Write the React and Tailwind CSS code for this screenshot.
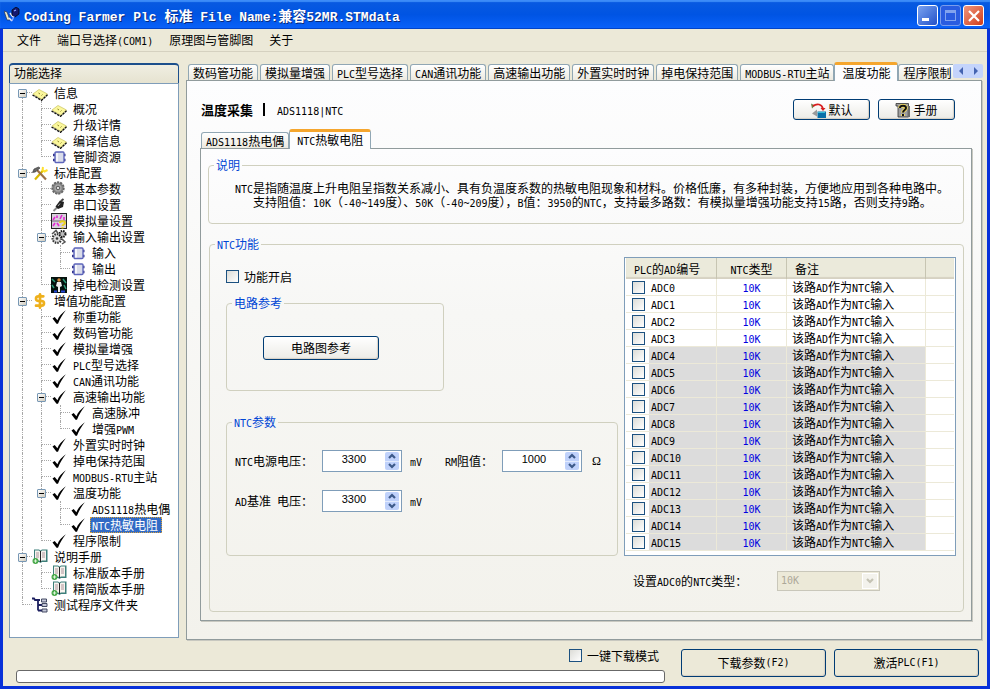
import React, { useState } from "react";
import clsx from "clsx";
import { DollarSign } from "lucide-react";

// Latin runs are set half as wide as a Chinese character
const Mixed = ({ children, latin = "font-['DejaVu_Sans_Mono',monospace] text-[10px]" }) =>
  children.split(/([\x20-\x7e]+)/).map((part, i) =>
    i % 2 ? (
      <span key={i} className={clsx("whitespace-pre leading-none", latin)}>
        {part}
      </span>
    ) : (
      part
    )
  );

/* ---------- icons ---------- */

const Svg = ({ children, className = "h-4 w-4" }) => (
  <svg viewBox="0 0 16 16" className={clsx("shrink-0", className)} aria-hidden="true">
    {children}
  </svg>
);

const NoteIcon = () => (
  <Svg>
    <path d="M1 9L7 4.500l8.500 4.500L10 14.500z" fill="#fbf79c" stroke="#cfc96a" strokeWidth=".8" />
    <path d="M.5 10L9.500 15.300l6-5.500" fill="none" stroke="#111" strokeWidth="1.400" strokeDasharray="2.500 .8" />
    <path d="M6.500 8l1.500 1M10.500 9.500l-1 1" stroke="#8a8426" strokeWidth="1" />
  </Svg>
);

const ChipIcon = () => (
  <Svg>
    <path d="M2 6h12.500M2 11h12.500" stroke="#34348c" strokeWidth="2.400" />
    <rect x="4" y="3" width="9" height="10.500" rx="1" fill="#d9dcea" stroke="#5d65bb" strokeWidth="1.400" />
    <path d="M6 4v8.500" stroke="#fff" strokeWidth="1.500" />
  </Svg>
);

const ToolsIcon = () => (
  <Svg>
    <path d="M3 14.500L11.500 5" stroke="#d8b800" strokeWidth="2.200" />
    <path d="M11 2l-.5 3 2 1.500 3-1.500" fill="none" stroke="#ffe02e" strokeWidth="2" />
    <path d="M5 5l9 9.500" stroke="#9a7048" strokeWidth="2.200" />
    <path d="M.5 7.500L2 4l4.500-2L8 3 5 5.500 3.500 7z" fill="#666" stroke="#333" strokeWidth=".6" />
  </Svg>
);

const GearIcon = () => (
  <Svg>
    <circle cx="7" cy="7" r="5.800" fill="#8c8c8c" stroke="#666" strokeWidth="1.800" strokeDasharray="2.200 1" />
    <circle cx="7" cy="7" r="4.200" fill="#a9a9a9" stroke="#7a7a7a" />
    <circle cx="7" cy="7" r="1.800" fill="#ddd" stroke="#555" />
  </Svg>
);

const PlugIcon = () => (
  <Svg>
    <path d="M2.500 14l4-4" stroke="#888" strokeWidth="1.800" />
    <path d="M4.500 9.500L9 3.500l4 1.500-1 5-5 2z" fill="#222" />
    <path d="M10 4l2.500-2" stroke="#444" strokeWidth="2" />
    <path d="M7 9l2-2.500" stroke="#aaa" />
  </Svg>
);

const WaveIcon = () => (
  <Svg>
    <rect x=".5" y=".5" width="15" height="15" fill="#d8cfdc" stroke="#222" />
    <path d="M1 8h14" stroke="#6b6773" />
    <path d="M2 7l2-3M6 5V2.500M9 6l2-4M13 4v3M2 13l2-3M6 10l2 3" fill="none" stroke="#e22bd2" strokeWidth="1.600" />
    <path d="M9 10c0-2.500 5-2.500 5 0 0 1.500-2.500 1.500-2.500 3M11.500 14v1.500" fill="none" stroke="#e8d020" strokeWidth="2" />
  </Svg>
);

const GearsIcon = () => (
  <Svg>
    <circle cx="6" cy="9.500" r="4.400" fill="#ddd" stroke="#333" strokeWidth="2.200" strokeDasharray="1.500 1" />
    <circle cx="11.500" cy="5" r="3" fill="#bbb" stroke="#111" strokeWidth="2" strokeDasharray="1.400 1" />
    <circle cx="6" cy="9.500" r="1.300" fill="#333" />
    <path d="M1 5l4-3.500 2 3M11 10l3 3-3 2" fill="none" stroke="#555" strokeWidth="1.500" />
  </Svg>
);

const PowerIcon = () => (
  <Svg>
    <rect width="16" height="16" fill="#06110d" />
    <path d="M1 2l3 3M12 2l3 4M13 8l2 4M1 8l2 3" stroke="#2d9a77" strokeWidth="1.500" />
    <path d="M6 5h4l1 4-2 1v5H7v-5L5 9z" fill="#eee" />
    <circle cx="8" cy="3" r="1.700" fill="#d48a3a" />
    <path d="M3 14.500h3M10 14.500h4" stroke="#2547d8" strokeWidth="2" />
  </Svg>
);

const CoinIcon = () => <DollarSign className="h-4 w-4 shrink-0 text-[#eeb01c]" strokeWidth={4} aria-hidden="true" />;

const CheckIcon = () => (
  <Svg>
    <path d="M1.500 9.500l2.200-1.500 2.700 3.300C8 7 11 4 14.800 1.200 11.500 5.500 9 9.500 7 14.800H5.500z" fill="#000" />
  </Svg>
);

const BookIcon = () => (
  <Svg>
    <path d="M2 .5h5l1.500 1 1.500-1h5.500v12.500H10l-1.500 1-1.500-1H2z" fill="#3d7f7a" />
    <path d="M3 1.500h4l1 1v9.500L7 11.500H3zM9 2.500l1-1h4v10h-4l-1 .5z" fill="#f8f4ef" />
    <path d="M4 4h3M4 6h3M4 8h3M10 4h3M10 6h3M10 8h3" stroke="#9a7f88" strokeWidth=".8" />
    <path d="M8.500 2v11" stroke="#222" />
    <circle cx="3.500" cy="12" r="3" fill="#46a848" />
    <path d="M3.500 10.300v3.400M1.800 12h3.400" stroke="#dff5dc" />
  </Svg>
);

const NodesIcon = () => (
  <Svg>
    <path d="M0 1.500h2l1 1.500h5M6 3v10.500M6 8h4M6 13.500h4" fill="none" stroke="#1d2060" strokeWidth="1.800" />
    <path d="M9.500 2h5v3h-5zM10 6.500h5v3h-5zM10 12h5v3h-5z" fill="#c5c8d8" stroke="#333a55" strokeWidth=".9" />
  </Svg>
);

const AppIcon = () => (
  <Svg>
    <path d="M0 4l3 1 3 8H3z" fill="#e8e8c8" stroke="#203060" strokeWidth=".7" />
    <path d="M5 11l3 3M6 6l3 4" stroke="#e9e9f4" strokeWidth="1.500" />
    <path d="M8 3l4-3 3 2v5l-4 3-3-2z" fill="#15186f" stroke="#000" strokeWidth=".7" />
    <path d="M10 4l2-1M10 9l-2 5" stroke="#8ea8ff" strokeWidth="1.200" />
  </Svg>
);

const ResetIcon = () => (
  <Svg>
    <path d="M1 1.500l4 2-3 3z" fill="#6d7b45" />
    <path d="M3 4c4-3 9-2 10 3" fill="none" stroke="#d81e1e" strokeWidth="1.800" />
    <path d="M10.500 6h5L13 9z" fill="#d81e1e" />
    <path d="M2 11.500l5-4v7z" fill="#9a9a9a" />
    <rect x="7.500" y="9.500" width="8.500" height="6.500" fill="#0b6fa8" />
    <path d="M8 10.500h7" stroke="#36c0d8" />
  </Svg>
);

const HelpIcon = () => (
  <Svg>
    <path d="M1 1.500h12.500V15H3V4H1z" fill="#a0a0a0" stroke="#333" strokeWidth=".8" />
    <path d="M12.500 4H15v11h-2.500z" fill="#6d6d6d" />
    <path d="M5 6c0-3 6-3 6 0 0 2-3 2-3 4.500M8 12v2" fill="none" stroke="#ffe45a" strokeWidth="3.600" />
    <path d="M5 6c0-3 6-3 6 0 0 2-3 2-3 4.500M8 12v2" fill="none" stroke="#111" strokeWidth="2" />
  </Svg>
);

const Triangle = ({ d, className }) => (
  <svg viewBox="0 0 8 6" className={className} aria-hidden="true">
    <path d={d} fill="none" stroke="currentColor" strokeWidth="2.2" />
  </svg>
);

/* ---------- function tree ---------- */

const tree = [
  {
    label: "信息",
    icon: NoteIcon,
    children: [
      { label: "概况", icon: NoteIcon },
      { label: "升级详情", icon: NoteIcon },
      { label: "编译信息", icon: NoteIcon },
      { label: "管脚资源", icon: ChipIcon },
    ],
  },
  {
    label: "标准配置",
    icon: ToolsIcon,
    children: [
      { label: "基本参数", icon: GearIcon },
      { label: "串口设置", icon: PlugIcon },
      { label: "模拟量设置", icon: WaveIcon },
      {
        label: "输入输出设置",
        icon: GearsIcon,
        children: [
          { label: "输入", icon: ChipIcon },
          { label: "输出", icon: ChipIcon },
        ],
      },
      { label: "掉电检测设置", icon: PowerIcon },
    ],
  },
  {
    label: "增值功能配置",
    icon: CoinIcon,
    children: [
      { label: "称重功能", icon: CheckIcon },
      { label: "数码管功能", icon: CheckIcon },
      { label: "模拟量增强", icon: CheckIcon },
      { label: "PLC型号选择", icon: CheckIcon },
      { label: "CAN通讯功能", icon: CheckIcon },
      {
        label: "高速输出功能",
        icon: CheckIcon,
        children: [
          { label: "高速脉冲", icon: CheckIcon },
          { label: "增强PWM", icon: CheckIcon },
        ],
      },
      { label: "外置实时时钟", icon: CheckIcon },
      { label: "掉电保持范围", icon: CheckIcon },
      { label: "MODBUS-RTU主站", icon: CheckIcon },
      {
        label: "温度功能",
        icon: CheckIcon,
        children: [
          { label: "ADS1118热电偶", icon: CheckIcon },
          { label: "NTC热敏电阻", icon: CheckIcon, selected: true },
        ],
      },
      { label: "程序限制", icon: CheckIcon },
    ],
  },
  {
    label: "说明手册",
    icon: BookIcon,
    children: [
      { label: "标准版本手册", icon: BookIcon },
      { label: "精简版本手册", icon: BookIcon },
    ],
  },
  { label: "测试程序文件夹", icon: NodesIcon },
];

// One 19px step of the dotted guide lines
const Guide = ({ up, down, across, children }) => (
  <span className="relative grid h-4 w-[19px] shrink-0 grid-cols-2 grid-rows-2">
    <span className={clsx("border-[#a8a8a8]", up && "border-r border-dotted")} />
    <span className={clsx("border-[#a8a8a8]", across && "border-b border-dotted")} />
    <span className={clsx("border-[#a8a8a8]", down && "border-r border-dotted")} />
    {children}
  </span>
);

const TreeRows = ({ nodes, parents = [] }) => {
  const [closed, setClosed] = useState({});
  return (
    <ul>
      {nodes.map((node, i) => {
        const last = i === nodes.length - 1;
        const Icon = node.icon;
        const open = !closed[node.label];
        return (
          <li key={node.label}>
            <div className="flex h-4 items-center">
              {parents.map((more, k) => (
                <Guide key={k} up={more} down={more} />
              ))}
              <Guide up={i > 0 || parents.length > 0} down={!last} across>
                {node.children && (
                  <button
                    aria-label={(open ? "折叠" : "展开") + node.label}
                    onClick={() => setClosed({ ...closed, [node.label]: open })}
                    className="absolute top-1 left-[5px] flex h-[9px] w-[9px] items-center justify-center rounded-[1px] border border-[#7898b5] bg-gradient-to-br from-white to-[#cfcabd]"
                  >
                    <span className="h-px w-[5px] bg-black" />
                    {!open && <span className="absolute h-[5px] w-px bg-black" />}
                  </button>
                )}
              </Guide>
              <Icon />
              <a
                href="#"
                className={clsx(
                  "ml-1 whitespace-nowrap border pr-[3px] pl-px leading-[14px]",
                  node.selected ? "border-dotted border-[#d9a13b] bg-[#316ac5] text-white" : "border-transparent"
                )}
              >
                <Mixed>{node.label}</Mixed>
              </a>
            </div>
            {node.children && open && <TreeRows nodes={node.children} parents={[...parents, !last]} />}
          </li>
        );
      })}
    </ul>
  );
};

/* ---------- small controls ---------- */

const Tab = ({ label, active, joined }) => (
  <button
    role="tab"
    aria-selected={!!active}
    className={clsx(
      "shrink-0 whitespace-nowrap rounded-t-[3px] border-x border-t border-[#91a7b4]",
      active
        ? "relative h-full border-t-[3px] border-t-[#f5a62e] bg-[#fdfdfe] px-[7px] pb-1"
        : "mb-px h-4 bg-gradient-to-b from-white to-[#ece9df] px-1 leading-[15px]",
      !active && !joined && "mr-0.5"
    )}
  >
    <Mixed>{label}</Mixed>
  </button>
);

const Button = ({ children, className }) => (
  <button
    className={clsx(
      "flex items-center justify-center rounded-[3px] border border-[#003c74] shadow-[inset_-1px_-1px_1px_#d6d0c5]",
      className
    )}
  >
    {children}
  </button>
);

const Group = ({ title, className, children }) => (
  <fieldset className={clsx("min-w-0 rounded-[4px] border border-[#d0d0bf]", className)}>
    <legend className="ml-[5px] px-0.5 leading-4 text-[#0046d5]">
      <Mixed>{title}</Mixed>
    </legend>
    {children}
  </fieldset>
);

const CheckBox = ({ className, ...props }) => (
  <input
    type="checkbox"
    className={clsx(
      "block h-[13px] w-[13px] shrink-0 appearance-none border border-[#1c5180] bg-gradient-to-br from-[#dcdcd7] to-white checked:bg-[#21a121]",
      className
    )}
    {...props}
  />
);

const SpinBox = ({ id, initial }) => {
  const [value, setValue] = useState(initial);
  return (
    <div className="flex h-[22px] w-20 items-start border border-[#7f9db9] bg-white">
      <input
        id={id}
        value={value}
        onChange={(e) => setValue(Number(e.target.value) || 0)}
        className="h-4 w-[62px] bg-transparent text-center font-['Liberation_Sans',sans-serif] text-[11px] outline-none"
      />
      <div className="mt-px flex h-[18px] w-[14px] flex-col rounded-[2px] bg-[#c0d2fb] text-[#3d5a8a]">
        <button aria-label="增加" onClick={() => setValue(value + 1)} className="flex flex-1 items-center justify-center">
          <Triangle d="M1 5l3-3 3 3" className="h-[6px] w-2" />
        </button>
        <button
          aria-label="减少"
          onClick={() => setValue(value - 1)}
          className="flex flex-1 items-center justify-center border-t border-[#e3ebfe]"
        >
          <Triangle d="M1 1l3 3 3-3" className="h-[6px] w-2" />
        </button>
      </div>
    </div>
  );
};

/* ---------- page ---------- */

const mainTabs = [
  "数码管功能",
  "模拟量增强",
  "PLC型号选择",
  "CAN通讯功能",
  "高速输出功能",
  "外置实时时钟",
  "掉电保持范围",
  "MODBUS-RTU主站",
  "温度功能",
  "程序限制",
];
const activeTab = 8;

const channels = Array.from({ length: 16 }, (_, i) => ({ name: `ADC${i}`, usable: i < 4 }));

const TitleBar = () => (
  <header className="flex h-[29px] shrink-0 items-center bg-gradient-to-b from-[#0a5be0] via-[#0054e3] to-[#0a62fb] pr-1.5 pl-1 text-white shadow-[inset_0_2px_1px_#3c8cf8,inset_0_-1px_0_#0144c8]">
    <AppIcon />
    <h1 className="ml-1 flex-1 whitespace-nowrap pt-0.5 text-[14px] font-bold [text-shadow:1px_1px_0_#0a2a7a]">
      <Mixed latin="font-['Liberation_Mono',monospace] text-[13px]">
        Coding Farmer Plc 标准 File Name:兼容52MR.STMdata
      </Mixed>
    </h1>
    <div className="flex gap-0.5 pt-0.5">
      <button
        aria-label="最小化"
        className="flex h-[21px] w-[21px] items-end rounded-[3px] border border-white bg-gradient-to-br from-[#7ba2f0] to-[#2450c8] pb-1 pl-1"
      >
        <span className="h-[3px] w-[7px] bg-white" />
      </button>
      <button
        aria-label="最大化"
        disabled
        className="flex h-[21px] w-[21px] items-center justify-center rounded-[3px] border border-[#7a9cec] bg-[#2a5ce0]"
      >
        <span className="h-[11px] w-[11px] border border-t-[3px] border-[#82a3ee]" />
      </button>
      <button
        aria-label="关闭"
        className="flex h-[21px] w-[21px] items-center justify-center rounded-[3px] border border-white bg-gradient-to-br from-[#f0947a] to-[#cf3a12]"
      >
        <svg viewBox="0 0 12 12" className="h-3 w-3" aria-hidden="true">
          <path d="M1 1l10 10M11 1L1 11" stroke="#fff" strokeWidth="2.2" />
        </svg>
      </button>
    </div>
  </header>
);

const NtcTable = () => (
  <div className="border border-[#7f9db9] bg-white px-px pb-1">
    <table className="w-full table-fixed border-separate border-spacing-0">
      <colgroup>
        <col className="w-[23px]" />
        <col className="w-[68px]" />
        <col className="w-[70px]" />
        <col className="w-[139px]" />
        <col />
      </colgroup>
      <thead>
        <tr className="h-[21px] bg-[#ebeadb] text-left shadow-[inset_0_-2px_1px_#d6d2c2]">
          <th colSpan={2} className="border-r border-[#c7c5b2] p-0 pl-2 font-normal">
            <Mixed>PLC的AD编号</Mixed>
          </th>
          <th className="border-r border-[#c7c5b2] p-0 text-center font-normal">
            <Mixed>NTC类型</Mixed>
          </th>
          <th className="border-r border-[#c7c5b2] p-0 pl-2 font-normal">备注</th>
          <th className="p-0" />
        </tr>
      </thead>
      <tbody>
        {channels.map(({ name, usable }) => {
          const cell = clsx("h-[17px] border-r border-b border-[#ece9d8] p-0 leading-4", !usable && "bg-[#dcdcdc]");
          return (
            <tr key={name}>
              <td className="h-[17px] border-b border-[#ece9d8] p-0 pl-1.5">
                <CheckBox id={name} />
              </td>
              <td className={cell}>
                <label htmlFor={name} className="block pl-0.5">
                  <Mixed>{name}</Mixed>
                </label>
              </td>
              <td className={clsx(cell, "text-center text-[#0000e0]")}>
                <Mixed>10K</Mixed>
              </td>
              <td className={clsx(cell, "pl-[5px]")}>
                <Mixed>该路AD作为NTC输入</Mixed>
              </td>
              <td className="border-b border-[#ece9d8] p-0" />
            </tr>
          );
        })}
      </tbody>
    </table>
  </div>
);

const NtcPanel = () => (
  <div className="flex flex-1 flex-col border border-[#919b9c] bg-gradient-to-b from-[#fdfdfe] via-[#f7f7f5] via-35% to-[#f3f2ec] px-[7px] pt-2 pb-2 shadow-[1px_1px_0_#c8c8c0]">
    <Group title="说明" className="pb-3.5">
      <p className="pt-2 pl-[26px] leading-[13px]">
        <Mixed>
          NTC是指随温度上升电阻呈指数关系减小、具有负温度系数的热敏电阻现象和材料。价格低廉，有多种封装，方便地应用到各种电路中。
        </Mixed>
      </p>
      <p className="pl-11 leading-[13px]">
        <Mixed>
          支持阻值：10K（-40~149度）、50K（-40~209度），B值：3950的NTC，支持最多路数：有模拟量增强功能支持15路，否则支持9路。
        </Mixed>
      </p>
    </Group>

    <Group title="NTC功能" className="mt-3 ml-px flex-1">
      <div className="flex pr-[7px] pl-4">
        <div className="mr-1.5 min-w-0 flex-1 pt-[18px]">
          <div className="flex items-center">
            <CheckBox id="enable" />
            <label htmlFor="enable" className="pl-[5px] leading-[13px]">
              功能开启
            </label>
          </div>

          <Group title="电路参考" className="mt-3 w-[218px]">
            <div className="pt-[25px] pb-[30px] pl-9">
              <Button className="h-6 w-[116px] bg-gradient-to-b from-white to-[#ecebe6]">电路图参考</Button>
            </div>
          </Group>

          <Group title="NTC参数" className="mt-[23px]">
            <div className="grid grid-cols-[87px_80px_43px_57px_80px_1fr] items-center gap-y-[18px] pt-5 pb-[43px] pl-2">
              <label htmlFor="supply">
                <Mixed>NTC电源电压：</Mixed>
              </label>
              <SpinBox id="supply" initial={3300} />
              <span className="pl-2">
                <Mixed>mV</Mixed>
              </span>
              <label htmlFor="rm" className="whitespace-nowrap">
                <Mixed>RM阻值：</Mixed>
              </label>
              <SpinBox id="rm" initial={1000} />
              <span className="pl-2.5 font-['Liberation_Serif',serif]">Ω</span>
              <label htmlFor="reference">
                <Mixed>AD基准 电压：</Mixed>
              </label>
              <SpinBox id="reference" initial={3300} />
              <span className="pl-2">
                <Mixed>mV</Mixed>
              </span>
            </div>
          </Group>
        </div>

        <div className="w-[332px] shrink-0 pt-[5px]">
          <NtcTable />
          <div className="mt-[15px] flex items-center pl-[9px]">
            <label htmlFor="type" className="w-36">
              <Mixed>设置ADC0的NTC类型：</Mixed>
            </label>
            <div className="relative w-[103px]">
              <select
                id="type"
                disabled
                className="block h-5 w-full appearance-none border border-[#c9c7ba] bg-[#ece9d8] pl-[3px] font-['DejaVu_Sans_Mono',monospace] text-[10px] text-[#aca899] opacity-100"
              >
                <option>10K</option>
              </select>
              <span className="pointer-events-none absolute top-0.5 right-0.5 flex h-4 w-4 items-center justify-center border border-white bg-[#f3f2ec] text-[#c5c3b4]">
                <Triangle d="M1 1l3 3 3-3" className="h-[6px] w-2" />
              </span>
            </div>
          </div>
        </div>
      </div>
    </Group>
  </div>
);

const App = () => {
  return (
    <div className="flex min-h-screen flex-col overflow-hidden bg-[#0831d9] font-['Noto_Sans_CJK_SC',sans-serif] text-[12px] leading-4 text-black">
      <TitleBar />

      <div className="mx-[3px] mb-[3px] flex flex-1 flex-col bg-[#ece9d8]">
        <nav className="flex h-[23px] items-center gap-4 border-b border-[#d5d1c0] pl-3.5">
          {["文件", "端口号选择(COM1)", "原理图与管脚图", "关于"].map((item) => (
            <button key={item} className="whitespace-nowrap">
              <Mixed>{item}</Mixed>
            </button>
          ))}
        </nav>

        <div className="flex flex-1 pr-[5px] pl-1.5">
          <aside className="mt-[11px] mb-0.5 flex w-[170px] shrink-0 flex-col">
            <h2 className="h-5 rounded-t-[4px] border-x border-t-2 border-[#1c4f8c] bg-gradient-to-b from-[#f0eee2] to-[#e6e3d0] pl-1">
              功能选择
            </h2>
            <div className="flex-1 border border-[#7f9db9] bg-white pt-px pl-[3px]">
              <TreeRows nodes={tree} />
            </div>
          </aside>

          <main className="ml-[7px] flex min-w-0 flex-1 flex-col pt-2.5">
            <div className="relative z-10 -mr-px -mb-px flex h-[19px] pl-0.5">
              <div role="tablist" className="flex min-w-0 flex-1 items-end overflow-hidden">
                {mainTabs.map((tab, i) => (
                  <Tab key={tab} label={tab} active={i === activeTab} joined={i === activeTab - 1} />
                ))}
              </div>
              <div className="mt-0.5 flex h-[14px] w-[30px] shrink-0 rounded-[2px] bg-[#c4d4fb] text-[#4463b0]">
                <button aria-label="向左" className="flex flex-1 items-center justify-center">
                  <svg viewBox="0 0 4 8" className="h-2 w-1" aria-hidden="true">
                    <path d="M4 0v8L0 4z" fill="currentColor" />
                  </svg>
                </button>
                <button aria-label="向右" className="flex flex-1 items-center justify-center">
                  <svg viewBox="0 0 4 8" className="h-2 w-1" aria-hidden="true">
                    <path d="M0 0v8l4-4z" fill="currentColor" />
                  </svg>
                </button>
              </div>
            </div>

            <div className="flex flex-1 flex-col border border-[#919b9c] bg-gradient-to-b from-[#fdfdfe] via-[#f8f8f6] via-40% to-[#f3f2ec] pt-[18px] pr-[9px] pb-[18px] pl-[13px] shadow-[1px_1px_0_#c8c8c0]">
              <div className="flex items-center pr-[17px] pl-px">
                <h2 className="text-[13px] font-bold">温度采集</h2>
                <span className="ml-2.5 h-[13px] w-0.5 bg-black" />
                <span className="ml-3 flex-1">
                  <Mixed>ADS1118|NTC</Mixed>
                </span>
                <Button className="mr-2 h-[21px] w-[77px] bg-gradient-to-b from-white to-[#ecebe6]">
                  <ResetIcon />
                  <span className="pl-0.5">默认</span>
                </Button>
                <Button className="h-[21px] w-[77px] bg-gradient-to-b from-white to-[#ecebe6]">
                  <HelpIcon />
                  <span className="pl-0.5">手册</span>
                </Button>
              </div>

              <div role="tablist" className="relative z-10 mt-[9px] -mb-px flex h-5 items-end pl-px">
                <Tab label="ADS1118热电偶" joined />
                <Tab label="NTC热敏电阻" active />
              </div>
              <NtcPanel />
            </div>
          </main>
        </div>

        <footer className="flex gap-4 pt-[9px] pr-2 pb-[3px] pl-[13px]">
          <div className="flex min-w-0 flex-1 flex-col justify-between">
            <div className="flex items-center justify-end pr-1.5">
              <CheckBox id="onekey" />
              <label htmlFor="onekey" className="pl-[5px] leading-[13px]">
                一键下载模式
              </label>
            </div>
            <div
              role="progressbar"
              aria-label="下载进度"
              aria-valuenow={0}
              className="h-[13px] rounded-[3px] border border-[#686868] bg-white"
            />
          </div>
          <div className="flex gap-2 pb-1.5">
            <Button className="h-7 w-[145px] bg-[#ece9d8]">
              <Mixed>下载参数(F2)</Mixed>
            </Button>
            <Button className="h-7 w-[145px] bg-[#ece9d8]">
              <Mixed>激活PLC(F1)</Mixed>
            </Button>
          </div>
        </footer>
      </div>
    </div>
  );
};

export default App;
